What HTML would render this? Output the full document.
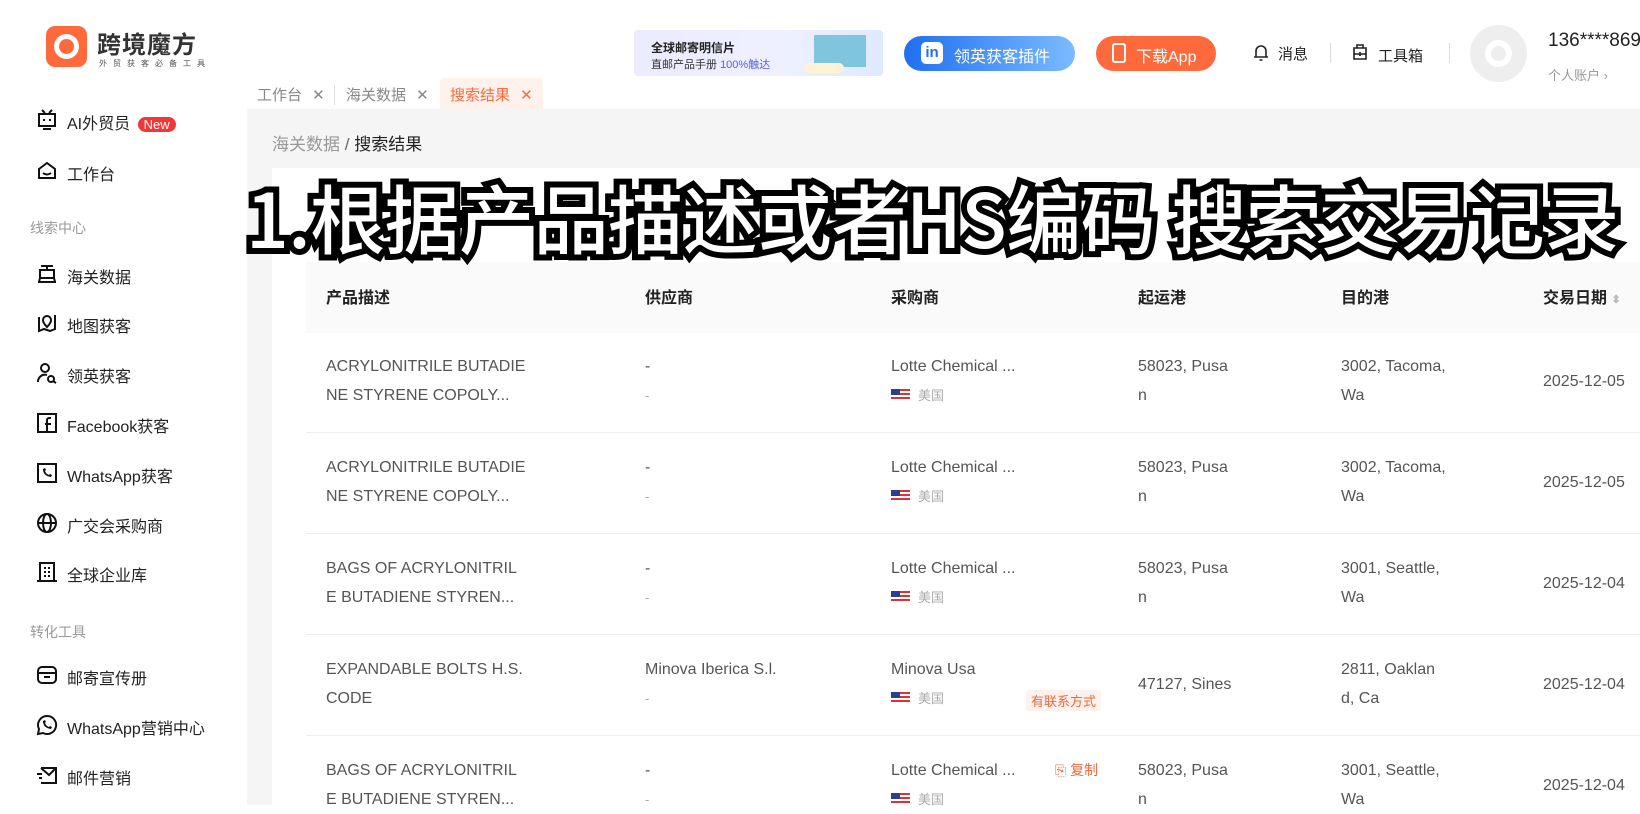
<!DOCTYPE html>
<html><head><meta charset="utf-8"><style>
*{margin:0;padding:0;box-sizing:border-box}
body{width:1640px;height:805px;overflow:hidden;background:#fff;font-family:"Liberation Sans","Noto Sans CJK SC",sans-serif;color:#333;position:relative}
.a{position:absolute;white-space:nowrap}
.side{font-size:16px;color:#222}
.side svg{position:absolute;left:-31px;top:-1px}
.grp{font-size:14px;color:#999}
.main{position:absolute;left:247px;top:109px;width:1393px;height:696px;background:#f5f5f5}
.card{position:absolute;left:272px;top:168px;width:1368px;height:637px;background:#fff}
.th{font-size:16px;font-weight:bold;color:#222}
.td{font-size:16px;color:#555;line-height:29px}
.sub{font-size:13px;color:#aaa}
.flag{display:inline-block;width:19px;height:12px;vertical-align:-1px;margin-right:8px;background:repeating-linear-gradient(#d33 0 2px,#fff 2px 4px);position:relative}
.flag:before{content:"";position:absolute;left:0;top:0;width:9px;height:6px;background:#2a3f8f}
.line{position:absolute;left:306px;width:1334px;height:1px;background:#eee}
.ov{position:absolute;left:246px;top:168px;font-family:"Noto Sans CJK SC",sans-serif;font-weight:500;font-size:75px;color:#fff;-webkit-text-stroke:12px #000;paint-order:stroke fill;white-space:nowrap;letter-spacing:-0.5px;line-height:96px}
</style></head><body>
<!-- logo -->
<div class="a" style="left:46px;top:26px;width:41px;height:41px;background:#ff6a3d;border-radius:9px"></div>
<div class="a" style="left:54px;top:34px;width:25px;height:25px;background:#fff;border-radius:50%"></div>
<div class="a" style="left:59px;top:39px;width:15px;height:15px;background:#ff6a3d;border-radius:50%"></div>
<div class="a" style="left:97px;top:25px;font-size:24px;font-weight:bold;color:#333;letter-spacing:1px">跨境魔方</div>
<div class="a" style="left:99px;top:58px;font-size:8px;color:#555;letter-spacing:6px">外贸获客必备工具</div>

<!-- header right -->
<div class="a" style="left:634px;top:30px;width:249px;height:46px;border-radius:4px;background:linear-gradient(90deg,#ecebff,#eef0ff 60%,#dfe9ff)"></div>
<div class="a" style="left:651px;top:39px;font-size:12px;font-weight:bold;color:#222">全球邮寄明信片</div>
<div class="a" style="left:651px;top:56px;font-size:11px;color:#333">直邮产品手册 <span style="color:#5561e8">100%触达</span></div>
<div class="a" style="left:814px;top:35px;width:52px;height:32px;background:#7ec5dd"></div>
<div class="a" style="left:804px;top:63px;width:40px;height:10px;border-radius:5px;background:#fff3d6"></div>
<div class="a" style="left:904px;top:36px;width:171px;height:35px;border-radius:18px;background:linear-gradient(90deg,#1f6ff0,#7bbbff)"></div>
<div class="a" style="left:921px;top:42px;width:22px;height:22px;border-radius:5px;background:#fff;color:#1f6ff0;font-weight:bold;font-size:15px;text-align:center;line-height:22px">in</div>
<div class="a" style="left:954px;top:43px;font-size:16px;color:#fff">领英获客插件</div>
<div class="a" style="left:1096px;top:36px;width:120px;height:35px;border-radius:18px;background:#ff6a3d"></div>
<div class="a" style="left:1112px;top:43px;width:14px;height:20px;border:2px solid #fff;border-radius:3px"></div>
<div class="a" style="left:1136px;top:43px;font-size:16px;color:#fff">下载App</div>
<svg class="a" style="left:1253px;top:44px" width="16" height="18" viewBox="0 0 16 18"><path d="M3 13V7a5 5 0 0 1 10 0v6zM1 13h14M6.5 16h3" fill="none" stroke="#222" stroke-width="1.6"/></svg>
<div class="a" style="left:1278px;top:43px;font-size:15px;color:#222">消息</div>
<div class="a" style="left:1330px;top:43px;width:1px;height:20px;background:#ddd"></div>
<svg class="a" style="left:1352px;top:43px" width="16" height="18" viewBox="0 0 16 18"><path d="M2 5h12v11H2zM5 5V2h6v3M2 11h12M8 9v4" fill="none" stroke="#222" stroke-width="1.6"/></svg>
<div class="a" style="left:1378px;top:45px;font-size:15px;color:#222">工具箱</div>
<div class="a" style="left:1449px;top:43px;width:1px;height:20px;background:#ddd"></div>
<div class="a" style="left:1470px;top:25px;width:57px;height:57px;border-radius:50%;background:#eee"></div>
<div class="a" style="left:1485px;top:40px;width:27px;height:27px;border-radius:50%;border:6px solid #fff"></div>
<div class="a" style="left:1548px;top:30px;font-size:19px;color:#222">136****869</div>
<div class="a" style="left:1548px;top:65px;font-size:13px;color:#999">个人账户 ›</div>

<!-- tabs -->
<div class="a" style="left:257px;top:84px;font-size:15px;color:#888">工作台 <span style="margin-left:6px">✕</span></div>
<div class="a" style="left:334px;top:85px;width:1px;height:20px;background:#ddd"></div>
<div class="a" style="left:346px;top:84px;font-size:15px;color:#888">海关数据 <span style="margin-left:6px">✕</span></div>
<div class="a" style="left:440px;top:78px;width:103px;height:31px;background:#fff1ec;border-radius:4px 4px 0 0"></div>
<div class="a" style="left:450px;top:84px;font-size:15px;color:#ff6a3d">搜索结果 <span style="margin-left:6px">✕</span></div>

<!-- sidebar -->
<div class="a side" style="left:67px;top:110px"><svg width="22" height="22" viewBox="0 0 22 22"><path d="M3 5h16v12H3zM6 1l3 3M16 1l-3 3M7 20h8M8 10v2M14 10v2" fill="none" stroke="#111" stroke-width="2"/></svg>AI外贸员 <span style="background:#f0383b;color:#fff;font-size:13px;border-radius:9px;padding:0 6px;margin-left:3px">New</span></div>
<div class="a side" style="left:67px;top:161px"><svg width="22" height="22" viewBox="0 0 22 22"><path d="M3 9l8-6 8 6v9H3zM7 13q4 3 8 0" fill="none" stroke="#111" stroke-width="2"/></svg>工作台</div>
<div class="a grp" style="left:30px;top:218px">线索中心</div>
<div class="a side" style="left:67px;top:264px"><svg width="22" height="22" viewBox="0 0 22 22"><path d="M5 3h12M11 3v4M4 7h14v8H4zM2 19h18M4 15l-1 4M18 15l1 4" fill="none" stroke="#111" stroke-width="2"/></svg>海关数据</div>
<div class="a side" style="left:67px;top:313px"><svg width="22" height="22" viewBox="0 0 22 22"><path d="M3 5v14l5-2 6 2 5-2V3M11 15s-4-4-4-7a4 4 0 0 1 8 0c0 3-4 7-4 7z" fill="none" stroke="#111" stroke-width="2"/></svg>地图获客</div>
<div class="a side" style="left:67px;top:363px"><svg width="22" height="22" viewBox="0 0 22 22"><circle cx="9" cy="6" r="4" fill="none" stroke="#111" stroke-width="2"/><path d="M2 20a7 7 0 0 1 9-7" fill="none" stroke="#111" stroke-width="2"/><circle cx="15" cy="17" r="3" fill="none" stroke="#111" stroke-width="2"/><path d="M17 19l3 2" stroke="#111" stroke-width="2"/></svg>领英获客</div>
<div class="a side" style="left:67px;top:413px"><svg width="22" height="22" viewBox="0 0 22 22"><path d="M2 2h18v18H2z" fill="none" stroke="#111" stroke-width="2"/><path d="M15 6h-2a2 2 0 0 0-2 2v12M9 12h6" fill="none" stroke="#111" stroke-width="2"/></svg>Facebook获客</div>
<div class="a side" style="left:67px;top:463px"><svg width="22" height="22" viewBox="0 0 22 22"><path d="M2 2h18v18H2z" fill="none" stroke="#111" stroke-width="2"/><path d="M7 7q0 7 8 8l1-2-2-1-1 1q-3-1-4-4l1-1-1-2z" fill="#111"/></svg>WhatsApp获客</div>
<div class="a side" style="left:67px;top:513px"><svg width="22" height="22" viewBox="0 0 22 22"><circle cx="11" cy="11" r="9" fill="none" stroke="#111" stroke-width="2"/><ellipse cx="11" cy="11" rx="4" ry="9" fill="none" stroke="#111" stroke-width="2"/><path d="M2 11h18" stroke="#111" stroke-width="2"/></svg>广交会采购商</div>
<div class="a side" style="left:67px;top:562px"><svg width="22" height="22" viewBox="0 0 22 22"><path d="M4 2h14v18H4zM1 20h20" fill="none" stroke="#111" stroke-width="2"/><path d="M8 6h2v2H8zM12 6h2v2h-2zM8 10h2v2H8zM12 10h2v2h-2zM8 14h2v2H8zM12 14h2v2h-2z" fill="#111"/></svg>全球企业库</div>
<div class="a grp" style="left:30px;top:622px">转化工具</div>
<div class="a side" style="left:67px;top:665px"><svg width="22" height="22" viewBox="0 0 22 22"><rect x="2" y="3" width="18" height="16" rx="4" fill="none" stroke="#111" stroke-width="2"/><path d="M2 9h18M8 13h6" stroke="#111" stroke-width="2"/></svg>邮寄宣传册</div>
<div class="a side" style="left:67px;top:715px"><svg width="22" height="22" viewBox="0 0 22 22"><path d="M11 2a9 9 0 0 0-8 13l-1 5 5-1A9 9 0 1 0 11 2z" fill="none" stroke="#111" stroke-width="2"/><path d="M7 7q0 7 8 8l1-2-2-1-1 1q-3-1-4-4l1-1-1-2z" fill="#111"/></svg>WhatsApp营销中心</div>
<div class="a side" style="left:67px;top:765px"><svg width="22" height="22" viewBox="0 0 22 22"><path d="M5 4h15v15H5M5 4l8 7 7-7M1 10h5M3 14h3" fill="none" stroke="#111" stroke-width="2"/></svg>邮件营销</div>

<!-- main -->
<div class="main"></div>
<div class="a" style="left:272px;top:130px;font-size:17px;color:#999">海关数据 <span style="color:#666">/</span> <span style="color:#222">搜索结果</span></div>
<div class="card"></div>
<div class="a" style="left:306px;top:262px;width:1334px;height:71px;background:#fafafa"></div>
<div class="a th" style="left:326px;top:284px">产品描述</div>
<div class="a th" style="left:645px;top:284px">供应商</div>
<div class="a th" style="left:891px;top:284px">采购商</div>
<div class="a th" style="left:1138px;top:284px">起运港</div>
<div class="a th" style="left:1341px;top:284px">目的港</div>
<div class="a th" style="left:1543px;top:284px">交易日期 <span style="color:#bbb;font-size:11px">⬍</span></div>

<div class="line" style="top:432px"></div>
<div class="line" style="top:533px"></div>
<div class="line" style="top:634px"></div>
<div class="line" style="top:735px"></div>

<!-- row1 -->
<div class="a td" style="left:326px;top:352px">ACRYLONITRILE BUTADIE<br>NE STYRENE COPOLY...</div>
<div class="a td" style="left:645px;top:352px">-<br><span class="sub">-</span></div>
<div class="a td" style="left:891px;top:352px">Lotte Chemical ...<br><span class="sub"><i class="flag"></i>美国</span></div>
<div class="a td" style="left:1138px;top:352px">58023, Pusa<br>n</div>
<div class="a td" style="left:1341px;top:352px">3002, Tacoma,<br>Wa</div>
<div class="a td" style="left:1543px;top:367px">2025-12-05</div>
<!-- row2 -->
<div class="a td" style="left:326px;top:453px">ACRYLONITRILE BUTADIE<br>NE STYRENE COPOLY...</div>
<div class="a td" style="left:645px;top:453px">-<br><span class="sub">-</span></div>
<div class="a td" style="left:891px;top:453px">Lotte Chemical ...<br><span class="sub"><i class="flag"></i>美国</span></div>
<div class="a td" style="left:1138px;top:453px">58023, Pusa<br>n</div>
<div class="a td" style="left:1341px;top:453px">3002, Tacoma,<br>Wa</div>
<div class="a td" style="left:1543px;top:468px">2025-12-05</div>
<!-- row3 -->
<div class="a td" style="left:326px;top:554px">BAGS OF ACRYLONITRIL<br>E BUTADIENE STYREN...</div>
<div class="a td" style="left:645px;top:554px">-<br><span class="sub">-</span></div>
<div class="a td" style="left:891px;top:554px">Lotte Chemical ...<br><span class="sub"><i class="flag"></i>美国</span></div>
<div class="a td" style="left:1138px;top:554px">58023, Pusa<br>n</div>
<div class="a td" style="left:1341px;top:554px">3001, Seattle,<br>Wa</div>
<div class="a td" style="left:1543px;top:569px">2025-12-04</div>
<!-- row4 -->
<div class="a td" style="left:326px;top:655px">EXPANDABLE BOLTS H.S.<br>CODE</div>
<div class="a td" style="left:645px;top:655px">Minova Iberica S.l.<br><span class="sub">-</span></div>
<div class="a td" style="left:891px;top:655px">Minova Usa<br><span class="sub"><i class="flag"></i>美国</span></div>
<div class="a" style="left:1026px;top:690px;font-size:13px;color:#f0683d;background:#fff1ec;padding:1px 5px;border-radius:3px">有联系方式</div>
<div class="a td" style="left:1138px;top:670px">47127, Sines</div>
<div class="a td" style="left:1341px;top:655px">2811, Oaklan<br>d, Ca</div>
<div class="a td" style="left:1543px;top:670px">2025-12-04</div>
<!-- row5 -->
<div class="a td" style="left:326px;top:756px">BAGS OF ACRYLONITRIL<br>E BUTADIENE STYREN...</div>
<div class="a td" style="left:645px;top:756px">-<br><span class="sub">-</span></div>
<div class="a td" style="left:891px;top:756px">Lotte Chemical ...<br><span class="sub"><i class="flag"></i>美国</span></div>
<div class="a" style="left:1055px;top:760px;font-size:14px;color:#f0683d">⎘ 复制</div>
<div class="a td" style="left:1138px;top:756px">58023, Pusa<br>n</div>
<div class="a td" style="left:1341px;top:756px">3001, Seattle,<br>Wa</div>
<div class="a td" style="left:1543px;top:771px">2025-12-04</div>

<div class="ov">1.根据产品描述或者HS编码 搜索交易记录</div>
</body></html>
